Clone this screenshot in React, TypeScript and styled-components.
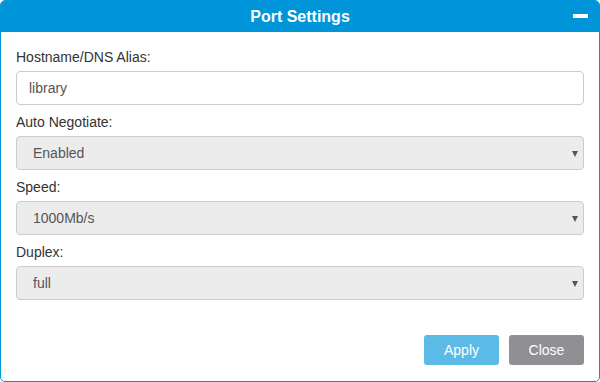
import React from 'react'
import styled, { createGlobalStyle } from 'styled-components'

const GlobalStyle = createGlobalStyle`
  html, body {
    margin: 0;
    padding: 0;
    background: #fff;
  }
  body {
    font-family: "Liberation Sans", Arial, sans-serif;
  }
`

const Window = styled.div`
  width: 600px;
  height: 382px;
  box-sizing: border-box;
  border: 1px solid #0095d9;
  border-radius: 5px;
  overflow: hidden;
  display: flex;
  flex-direction: column;
  background: #fff;
`

const Header = styled.div`
  height: 31px;
  background: #0095d9;
  display: flex;
  align-items: center;
  justify-content: center;
  position: relative;
  flex-shrink: 0;
`

const Title = styled.h1`
  margin: 0;
  font-size: 16px;
  font-weight: bold;
  color: #fff;
  line-height: 20px;
`

const MinimizeButton = styled.button`
  position: absolute;
  right: 11px;
  top: 13px;
  width: 15px;
  height: 4px;
  padding: 0;
  border: none;
  background: #fff;
  cursor: pointer;
`

const Body = styled.form`
  flex: 1;
  display: flex;
  flex-direction: column;
  padding: 15px 15px 0 15px;
`

const Field = styled.div`
  display: flex;
  flex-direction: column;
  margin-bottom: 7px;
`

const Label = styled.label`
  font-size: 14px;
  line-height: 20px;
  color: #333;
  margin-bottom: 4px;
`

const TextInput = styled.input`
  height: 34px;
  box-sizing: border-box;
  border: 1px solid #ccc;
  border-radius: 4px;
  padding: 0 12px;
  font-family: inherit;
  font-size: 14px;
  color: #555;
  background: #fff;
  outline: none;
`

const SelectWrap = styled.div`
  position: relative;
`

const Select = styled.select`
  width: 100%;
  height: 34px;
  box-sizing: border-box;
  appearance: none;
  -webkit-appearance: none;
  border: 1px solid #ccc;
  border-radius: 4px;
  padding: 0 24px 0 16px;
  font-family: inherit;
  font-size: 14px;
  color: #555;
  background: #ececec;
  outline: none;
`

const Caret = styled.span`
  position: absolute;
  right: 6px;
  top: 15px;
  width: 0;
  height: 0;
  border-left: 3.5px solid transparent;
  border-right: 3.5px solid transparent;
  border-top: 6px solid #555;
  pointer-events: none;
`

const Footer = styled.div`
  display: flex;
  justify-content: flex-end;
  gap: 10px;
  padding: 0 15px 16px 15px;
`

const Button = styled.button<{ $variant: 'primary' | 'secondary' }>`
  width: 75px;
  height: 30px;
  border: none;
  border-radius: 3px;
  font-family: inherit;
  font-size: 14px;
  color: #fff;
  cursor: pointer;
  background: ${({ $variant }) => ($variant === 'primary' ? '#5bbae6' : '#8f8f94')};
`

const selects = [
  { id: 'auto', label: 'Auto Negotiate:', value: 'Enabled', options: ['Enabled', 'Disabled'] },
  { id: 'speed', label: 'Speed:', value: '1000Mb/s', options: ['10Mb/s', '100Mb/s', '1000Mb/s'] },
  { id: 'duplex', label: 'Duplex:', value: 'full', options: ['half', 'full'] },
]

const App = () => {
  return (
    <>
      <GlobalStyle />
      <Window>
        <Header>
          <Title>Port Settings</Title>
          <MinimizeButton aria-label="Minimize" />
        </Header>
        <Body>
          <Field>
            <Label htmlFor="hostname">Hostname/DNS Alias:</Label>
            <TextInput id="hostname" defaultValue="library" />
          </Field>
          {selects.map((s) => (
            <Field key={s.id}>
              <Label htmlFor={s.id}>{s.label}</Label>
              <SelectWrap>
                <Select id={s.id} defaultValue={s.value}>
                  {s.options.map((o) => (
                    <option key={o}>{o}</option>
                  ))}
                </Select>
                <Caret />
              </SelectWrap>
            </Field>
          ))}
        </Body>
        <Footer>
          <Button type="button" $variant="primary">Apply</Button>
          <Button type="button" $variant="secondary">Close</Button>
        </Footer>
      </Window>
    </>
  )
}

export default App
